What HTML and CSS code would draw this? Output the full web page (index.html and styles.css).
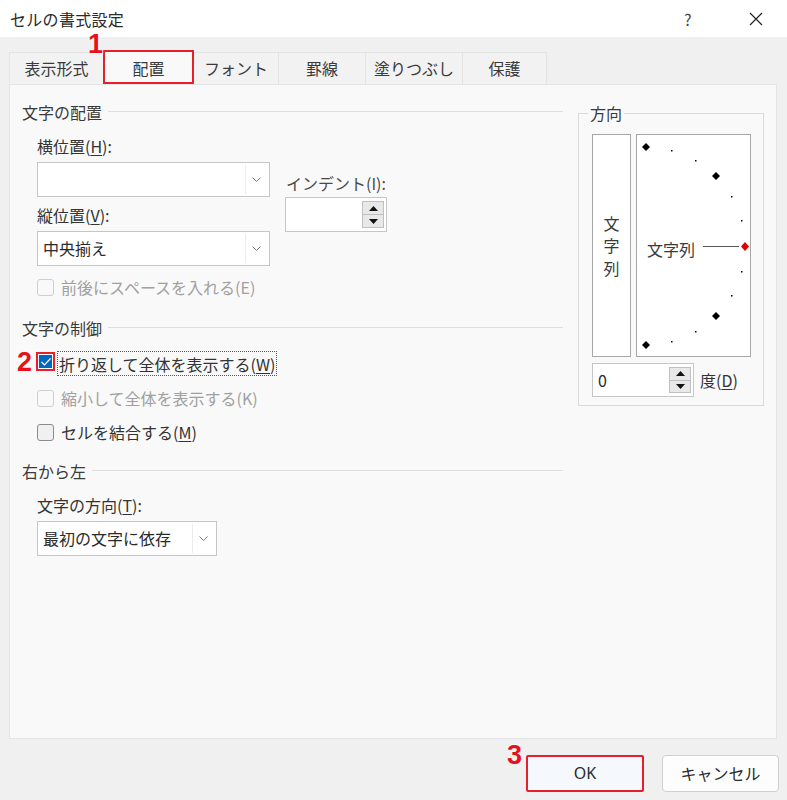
FILE: index.html
```html
<!DOCTYPE html>
<html lang="ja">
<head>
<meta charset="utf-8">
<title>セルの書式設定</title>
<link rel="stylesheet" href="styles.css">
</head>
<body>
<div class="dialog">
  <header class="titlebar">
    <span class="title">セルの書式設定</span>
    <span class="help">?</span>
    <span class="close"><svg width="14" height="14" viewBox="0 0 14 14"><path d="M1 1 L13 13 M13 1 L1 13" stroke="#222" stroke-width="1.2" fill="none"/></svg></span>
  </header>
  <div class="content">
    <div class="tabs">
      <div class="tab t1">表示形式</div>
      <div class="tab t2 selected">配置<span class="mark mark1">1</span></div>
      <div class="tab t3">フォント</div>
      <div class="tab t4">罫線</div>
      <div class="tab t5">塗りつぶし</div>
      <div class="tab t6">保護</div>
    </div>
    <div class="panel">
      <div class="left">
        <div class="sec"><span class="sec-title">文字の配置</span><span class="rule"></span></div>
        <div class="label lbl-h">横位置(<u>H</u>):</div>
        <div class="align-grid">
          <div class="col1">
            <div class="combo combo-wide"><span class="combo-text"></span><span class="combo-btn"><svg width="9" height="5" viewBox="0 0 9 5"><path d="M0.5 0.5 L4.5 4.5 L8.5 0.5" stroke="#777" fill="none"/></svg></span></div>
            <div class="label lbl-v">縦位置(<u>V</u>):</div>
            <div class="combo combo-wide combo-v"><span class="combo-text">中央揃え</span><span class="combo-btn"><svg width="9" height="5" viewBox="0 0 9 5"><path d="M0.5 0.5 L4.5 4.5 L8.5 0.5" stroke="#777" fill="none"/></svg></span></div>
          </div>
          <div class="col2">
            <div class="label lbl-indent">インデント(I):</div>
            <div class="spin spin-indent">
              <span class="spin-field"></span>
              <span class="spin-btns">
                <span class="spin-btn"><svg width="9" height="5" viewBox="0 0 9 5"><path d="M0 5 L4.5 0 L9 5 Z" fill="#111"/></svg></span>
                <span class="spin-btn"><svg width="9" height="5" viewBox="0 0 9 5"><path d="M0 0 L4.5 5 L9 0 Z" fill="#111"/></svg></span>
              </span>
            </div>
          </div>
        </div>
        <div class="check-row row-e disabled"><span class="box"></span><span class="check-text">前後にスペースを入れる(E)</span></div>

        <div class="sec sec2"><span class="sec-title">文字の制御</span><span class="rule"></span></div>
        <div class="check-row row-w"><span class="mark mark2">2</span><span class="box checked"><svg width="12" height="10" viewBox="0 0 12 10"><path d="M1.5 5 L4.5 8 L10.5 1.5" stroke="#fff" stroke-width="1.2" fill="none"/></svg></span><span class="check-text focus">折り返して全体を表示する(<u>W</u>)</span></div>
        <div class="check-row row-k disabled"><span class="box"></span><span class="check-text">縮小して全体を表示する(K)</span></div>
        <div class="check-row row-m"><span class="box plain"></span><span class="check-text">セルを結合する(<u>M</u>)</span></div>

        <div class="sec sec3"><span class="sec-title">右から左</span><span class="rule"></span></div>
        <div class="label lbl-t">文字の方向(<u>T</u>):</div>
        <div class="combo combo-dir"><span class="combo-text">最初の文字に依存</span><span class="combo-btn"><svg width="9" height="5" viewBox="0 0 9 5"><path d="M0.5 0.5 L4.5 4.5 L8.5 0.5" stroke="#777" fill="none"/></svg></span></div>
      </div>

      <fieldset class="orient">
        <legend>方向</legend>
        <div class="orient-boxes">
          <div class="vbox"><span>文</span><span>字</span><span>列</span></div>
          <div class="dial">
            <svg width="113" height="221" viewBox="0 0 113 221">
              <g fill="#000">
                <polygon points="9,8 13,12 9,16 5,12"/>
                <polygon points="79,37 83,41 79,45 75,41"/>
                <polygon points="79,177 83,181 79,185 75,181"/>
                <polygon points="9,206 13,210 9,214 5,210"/>
                <rect x="34" y="15" width="1.5" height="1.5"/>
                <rect x="58" y="25" width="1.5" height="1.5"/>
                <rect x="94" y="61" width="1.5" height="1.5"/>
                <rect x="104" y="85" width="1.5" height="1.5"/>
                <rect x="104" y="136" width="1.5" height="1.5"/>
                <rect x="94" y="160" width="1.5" height="1.5"/>
                <rect x="58" y="196" width="1.5" height="1.5"/>
                <rect x="34" y="206" width="1.5" height="1.5"/>
              </g>
              <line x1="66" y1="111.5" x2="102" y2="111.5" stroke="#555" stroke-width="1"/>
              <polygon points="108,107 112,111.5 108,116 104,111.5" fill="#e00000"/>
              <text x="10" y="121" class="dial-text">文字列</text>
            </svg>
          </div>
        </div>
        <div class="deg-row">
          <div class="spin spin-deg">
            <span class="spin-field">0</span>
            <span class="spin-btns">
              <span class="spin-btn"><svg width="9" height="5" viewBox="0 0 9 5"><path d="M0 5 L4.5 0 L9 5 Z" fill="#111"/></svg></span>
              <span class="spin-btn"><svg width="9" height="5" viewBox="0 0 9 5"><path d="M0 0 L4.5 5 L9 0 Z" fill="#111"/></svg></span>
            </span>
          </div>
          <span class="deg-label">度(<u>D</u>)</span>
        </div>
      </fieldset>
    </div>
    <div class="buttons">
      <div class="btn ok">OK<span class="mark mark3">3</span></div>
      <div class="btn cancel">キャンセル</div>
    </div>
  </div>
</div>
</body>
</html>
```
FILE: styles.css
```css
* { box-sizing: border-box; }
html, body { margin: 0; padding: 0; }
body {
  width: 787px;
  height: 800px;
  overflow: hidden;
  background: #f0f0f0;
  font-family: "Noto Sans CJK JP", "Noto Sans", sans-serif;
  font-size: 16px;
  color: #333;
}
u { text-decoration: underline; text-underline-offset: 2px; }

.titlebar {
  height: 37px;
  background: #ffffff;
  display: flex;
  align-items: center;
  padding-left: 10px;
}
.title { font-size: 16px; line-height: 20px; color: #2a2a2a; flex: 1; letter-spacing: 0.3px; }
.help { font-size: 16px; line-height: 20px; color: #444; width: 10px; margin-right: 55px; }
.close { width: 14px; height: 14px; margin-right: 24px; display: flex; }

.content { padding: 0 9px; }

.tabs {
  display: flex;
  align-items: flex-end;
  height: 47px;
  padding-top: 13px;
}
.tab {
  position: relative;
  height: 32px;
  line-height: 30px;
  text-align: center;
  font-size: 16px;
  color: #3a3a3a;
  background: #f2f2f2;
  border: 1px solid #e4e4e4;
  border-bottom: none;
  margin-right: -1px;
}
.t1 { width: 95px; }
.t2 { width: 91px; }
.t3 { width: 86px; }
.t4 { width: 88px; }
.t5 { width: 98px; }
.t6 { width: 85px; }
.tab.selected {
  height: 34px;
  line-height: 32px;
  background: #f9f9f9;
  border: 2px solid #e5202a;
  z-index: 1;
}

.mark {
  position: absolute;
  font-family: "Liberation Sans", Arial, sans-serif;
  font-weight: bold;
  font-size: 27px;
  line-height: 27px;
  color: #e8101a;
  text-shadow: 0 0 2px #fff, 0 0 2px #fff;
}
.mark1 { left: -17px; top: -21px; }
.mark2 { left: -5px; top: -3px; }
.mark3 { left: -21px; top: -15px; }

.panel {
  width: 768px;
  height: 655px;
  background: #f9f9f9;
  border: 1px solid #e4e4e4;
  display: flex;
  align-items: flex-start;
  gap: 15px;
  padding: 17px 12px 0 12px;
}

.left { width: 541px; display: flex; flex-direction: column; }

.sec { display: flex; align-items: center; height: 20px; }
.sec-title { font-size: 16px; line-height: 20px; color: #3a3a3a; }
.rule { flex: 1; border-top: 1px solid #dedede; margin-left: 6px; margin-top: -1px; }
.sec2 { margin-top: 20px; }
.sec3 { margin-top: 18px; }

.label { font-size: 16px; line-height: 20px; height: 20px; padding-left: 15px; color: #333; white-space: nowrap; }
.lbl-h { margin-top: 14px; }
.lbl-v { margin-top: 8px; padding-left: 0; }
.lbl-t { margin-top: 14px; }

.align-grid { display: flex; gap: 15px; padding-left: 15px; }
.col1 { width: 233px; display: flex; flex-direction: column; }
.col2 { display: flex; flex-direction: column; }
.lbl-indent { padding-left: 1px; margin-top: 17px; color: #4a4a4a; }

.combo {
  height: 35px;
  background: #fff;
  border: 1px solid #c6c6c6;
  display: flex;
  align-items: stretch;
  padding: 2px;
}
.combo-wide { margin-top: 6px; width: 233px; }
.combo-v { margin-top: 6px; }
.combo-text { flex: 1; font-size: 16px; line-height: 29px; padding-left: 3px; color: #2a2a2a; white-space: nowrap; }
.combo-btn {
  width: 22px;
  border-left: 1px solid #ececec;
  display: flex;
  align-items: center;
  justify-content: center;
}
.combo-dir { margin-top: 6px; margin-left: 15px; width: 180px; }

.spin {
  height: 35px;
  background: #fff;
  border: 1px solid #c6c6c6;
  display: flex;
  padding: 3px 2px 3px 0;
}
.spin-indent { width: 102px; margin-top: 4px; }
.spin-field { flex: 1; font-size: 16px; line-height: 27px; padding-left: 5px; color: #2a2a2a; }
.spin-btns { width: 22px; display: flex; flex-direction: column; }
.spin-btn {
  flex: 1;
  background: #e8e8e8;
  border: 1px solid #c0c0c0;
  display: flex;
  align-items: center;
  justify-content: center;
}
.spin-btn + .spin-btn { border-top: none; }

.check-row {
  position: relative;
  display: flex;
  align-items: center;
  padding-left: 15px;
  height: 22px;
  white-space: nowrap;
}
.box {
  width: 17px;
  height: 17px;
  border: 1px solid #cfcfcf;
  border-radius: 3px;
  margin-right: 7px;
  flex: none;
  display: flex;
  align-items: center;
  justify-content: center;
}
.box.plain { border-color: #8c8c8c; background: #f0f0f0; }
.box.checked {
  background: #0067c0;
  border: 2px solid #e5202a;
  border-radius: 0;
  width: 19px;
  height: 19px;
  margin-left: -1px;
  margin-right: 6px;
  box-shadow: inset 0 0 0 1px #fff;
}
.check-text { font-size: 16px; line-height: 20px; color: #333; }
.disabled .check-text { color: #a0a0a0; }
.check-text.focus { outline: 1px dotted #555; padding: 2px 1px 1px 1px; margin-left: -3px; }
.row-e { margin-top: 10px; }
.row-w { margin-top: 14px; height: 26px; align-items: flex-start; }
.row-k { margin-top: 9px; }
.row-m { margin-top: 12px; }

.orient {
  margin: 1px 0 0 0;
  width: 186px;
  height: 303px;
  border: 1px solid #dadada;
  padding: 0 12px 0 13px;
  min-width: 0;
}
.orient legend {
  font-size: 16px;
  line-height: 20px;
  padding: 0 2px;
  margin-left: -4px;
  color: #3a3a3a;
}
.orient-boxes { display: flex; gap: 5px; margin-top: 11px; }
.vbox {
  width: 39px;
  height: 223px;
  background: #fff;
  border: 1px solid #a7a7a7;
  display: flex;
  flex-direction: column;
  align-items: center;
  justify-content: center;
  font-size: 16px;
  line-height: 22.5px;
  color: #3a3a3a;
}
.dial {
  width: 115px;
  height: 223px;
  background: #fff;
  border: 1px solid #a7a7a7;
  display: flex;
}
.dial svg { display: block; }
.dial-text { font-family: "Noto Sans CJK JP", sans-serif; font-size: 16px; fill: #3a3a3a; }

.deg-row { display: flex; align-items: center; margin-top: 6px; gap: 6px; }
.spin-deg { width: 102px; height: 34px; }
.deg-label { font-size: 16px; line-height: 20px; color: #333; }

.buttons {
  display: flex;
  justify-content: flex-end;
  gap: 18px;
  padding-top: 16px;
  margin-right: -1px;
}
.btn {
  position: relative;
  height: 37px;
  border-radius: 4px;
  border: 1px solid #d0d0d0;
  background: #fdfdfd;
  font-size: 16px;
  line-height: 35px;
  text-align: center;
  color: #2a2a2a;
}
.btn.ok { width: 118px; border: 2px solid #e5202a; border-radius: 2px; background: #f5f8fc; line-height: 33px; font-family: "Noto Sans", sans-serif; }
.btn.cancel { width: 117px; }
```
